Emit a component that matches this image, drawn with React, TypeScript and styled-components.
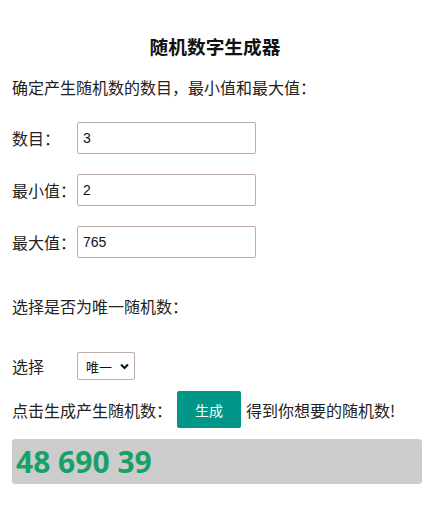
import React, { useState } from "react";
import styled, { createGlobalStyle } from "styled-components";

const Global = createGlobalStyle`
  html, body { margin: 0; padding: 0; background: #fff; }
  body { font-family: "Noto Sans CJK SC", "Noto Sans", sans-serif; color: #222; font-size: 16px; }
`;

const Page = styled.div`
  padding: 0 7px 0 12px;
  display: flex;
  flex-direction: column;
`;

const Title = styled.h3`
  margin: 32px 0 0;
  font-size: 18.7px;
  line-height: 28px;
  font-weight: 700;
  text-align: center;
  color: #111;
  padding-right: 4px;
`;

const Text = styled.p<{ $top: number }>`
  margin: ${(p) => p.$top}px 0 0;
  font-size: 16px;
  line-height: 24px;
`;

const Row = styled.div<{ $top: number; $h: number }>`
  display: flex;
  align-items: center;
  margin-top: ${(p) => p.$top}px;
  height: ${(p) => p.$h}px;
`;

const Label = styled.label`
  width: 65px;
  flex: none;
  font-size: 16px;
  line-height: 24px;
`;

const Field = styled.input`
  box-sizing: border-box;
  width: 179px;
  height: 32px;
  border: 1px solid #bcaca4;
  border-radius: 2px;
  padding: 0 5px;
  font-family: "Liberation Sans", Arial, sans-serif;
  font-size: 14px;
  color: #111;
  outline: none;
`;

const SelectWrap = styled.div`
  position: relative;
  width: 58px;
  height: 28px;
`;

const Select = styled.select`
  appearance: none;
  -webkit-appearance: none;
  box-sizing: border-box;
  width: 58px;
  height: 28px;
  border: 1px solid #bcaca4;
  border-radius: 2px;
  padding: 0 0 0 8px;
  font-family: "Noto Sans CJK SC", sans-serif;
  font-size: 13px;
  color: #111;
  background: #fff;
  outline: none;
`;

const Chevron = styled.svg`
  position: absolute;
  right: 6px;
  top: 11px;
  width: 9px;
  height: 7px;
  pointer-events: none;
`;

const Button = styled.button`
  width: 64px;
  height: 37px;
  margin: 0 5px;
  border: none;
  border-radius: 2px;
  background: #009688;
  color: #fff;
  font-family: "Noto Sans CJK SC", sans-serif;
  font-size: 14px;
  cursor: pointer;
`;

const Result = styled.div`
  margin-top: 11px;
  height: 45px;
  box-sizing: border-box;
  background: #cccccc;
  border-radius: 3px;
  padding-left: 4px;
  display: flex;
  align-items: center;
  font-family: "Noto Sans", sans-serif;
  font-weight: 700;
  font-size: 30px;
  color: #17a168;
`;

export default function App() {
  const [count, setCount] = useState("3");
  const [min, setMin] = useState("2");
  const [max, setMax] = useState("765");
  const [unique, setUnique] = useState("1");
  const [result, setResult] = useState("48 690 39");

  const generate = () => {
    const n = parseInt(count) || 0;
    const lo = parseInt(min) || 0;
    const hi = parseInt(max) || 0;
    const out: number[] = [];
    let guard = 0;
    while (out.length < n && guard < 10000) {
      guard++;
      const v = Math.floor(Math.random() * (hi - lo + 1)) + lo;
      if (unique === "1" && out.includes(v)) continue;
      out.push(v);
    }
    setResult(out.join(" "));
  };

  return (
    <Page>
      <Global />
      <Title>随机数字生成器</Title>
      <Text $top={15}>确定产生随机数的数目，最小值和最大值：</Text>
      <Row $top={23} $h={32}>
        <Label>数目：</Label>
        <Field value={count} onChange={(e) => setCount(e.target.value)} />
      </Row>
      <Row $top={20} $h={32}>
        <Label>最小值：</Label>
        <Field value={min} onChange={(e) => setMin(e.target.value)} />
      </Row>
      <Row $top={20} $h={32}>
        <Label>最大值：</Label>
        <Field value={max} onChange={(e) => setMax(e.target.value)} />
      </Row>
      <Text $top={36}>选择是否为唯一随机数：</Text>
      <Row $top={34} $h={28}>
        <Label>选择</Label>
        <SelectWrap>
          <Select value={unique} onChange={(e) => setUnique(e.target.value)}>
            <option value="1">唯一</option>
            <option value="0">不唯一</option>
          </Select>
          <Chevron viewBox="0 0 9 7">
            <path d="M1 1.5 L4.5 5 L8 1.5" fill="none" stroke="#111" strokeWidth="2" />
          </Chevron>
        </SelectWrap>
      </Row>
      <Row $top={11} $h={37}>
        <span>点击生成产生随机数：</span>
        <Button onClick={generate}>生成</Button>
        <span>得到你想要的随机数!</span>
      </Row>
      <Result>{result}</Result>
    </Page>
  );
}
